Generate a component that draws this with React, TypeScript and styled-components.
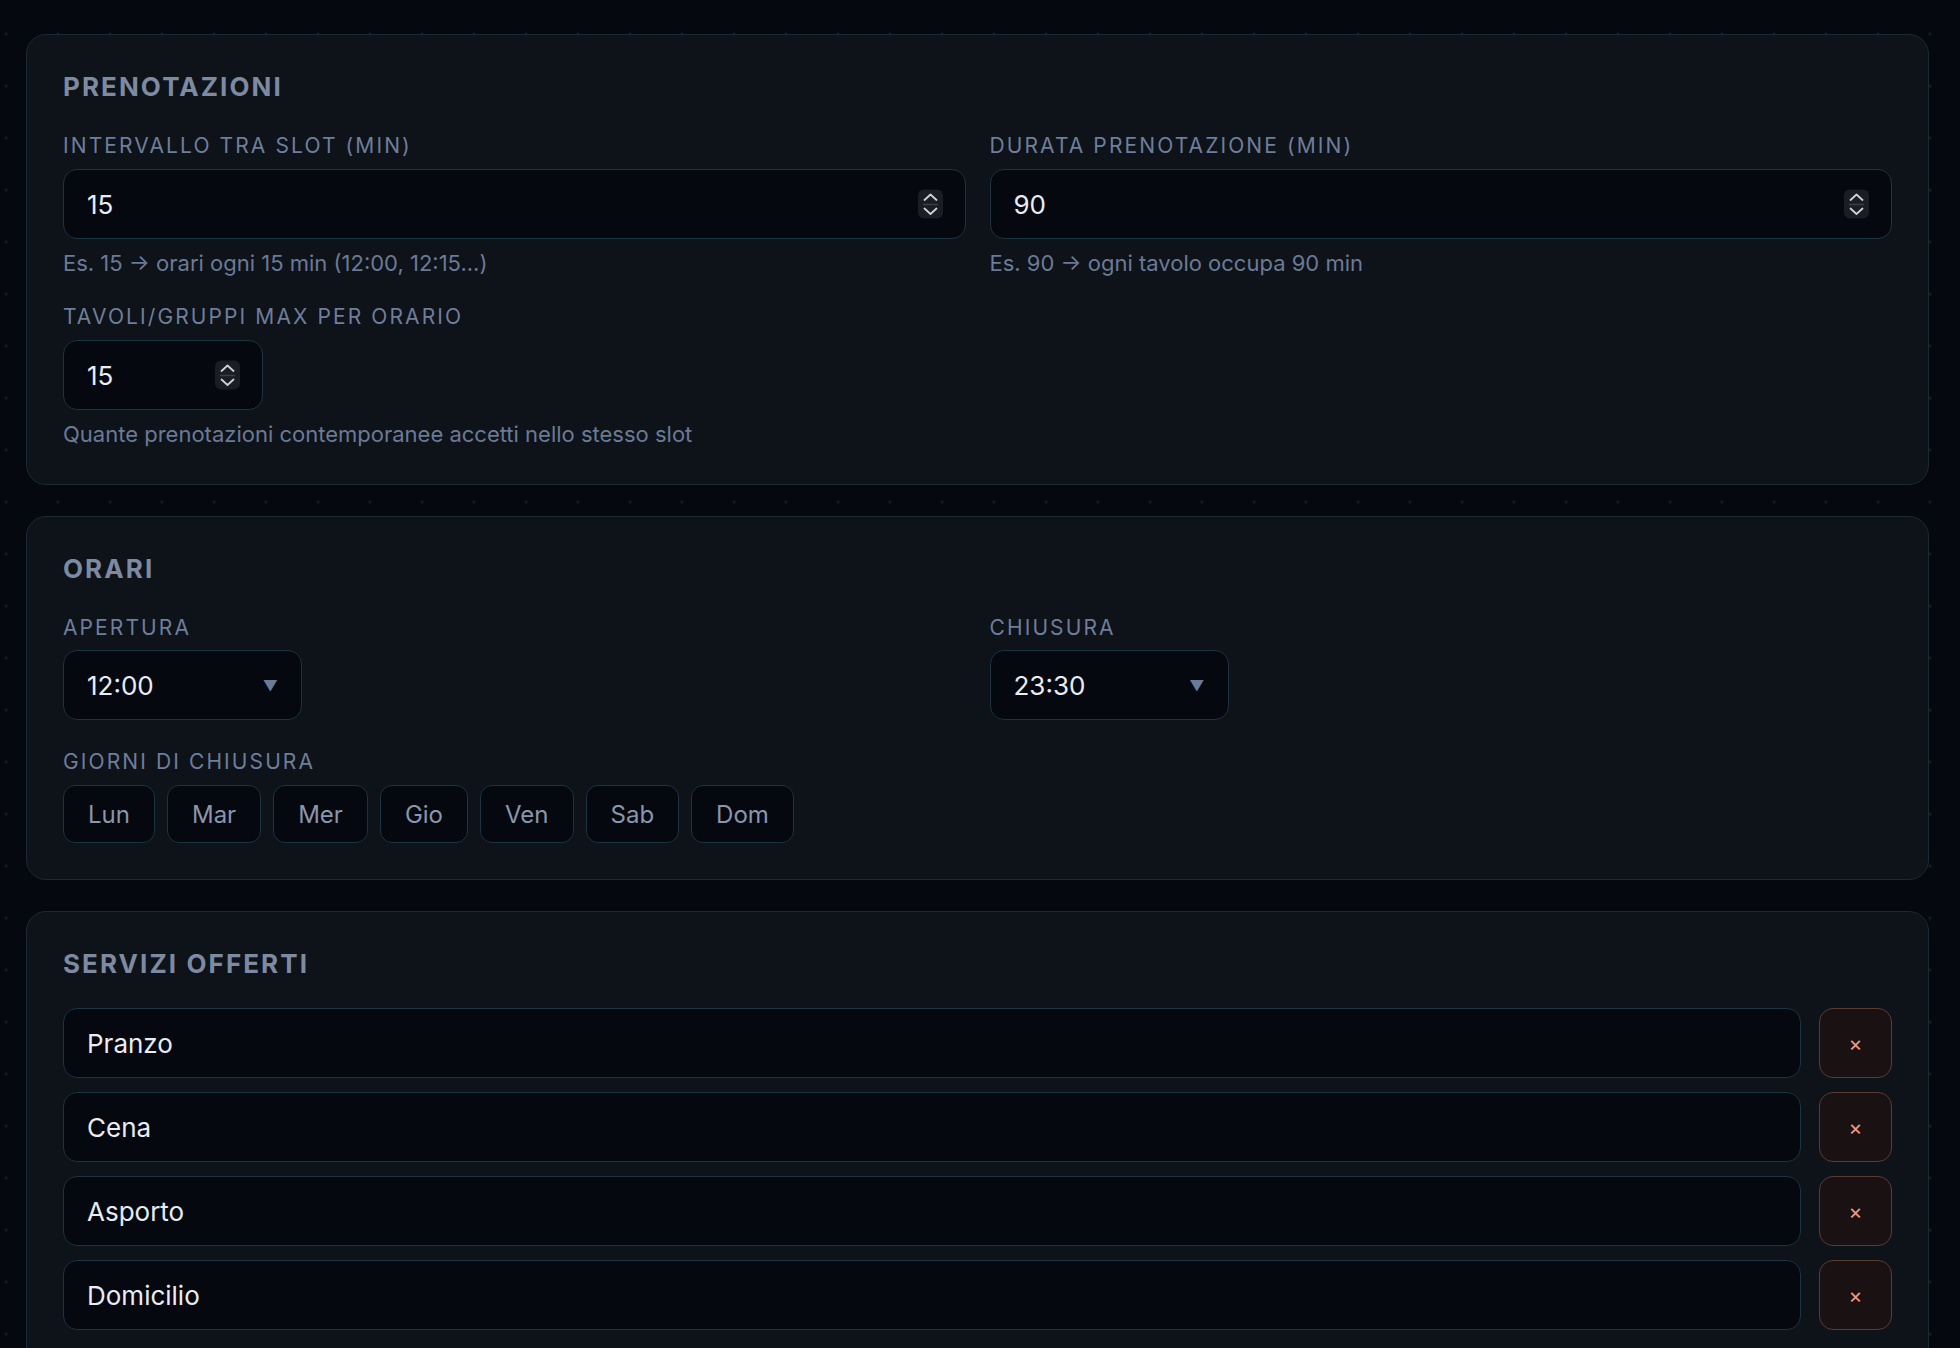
import React from "react";
import styled, { createGlobalStyle } from "styled-components";

const GlobalStyle = createGlobalStyle`
  html, body {
    margin: 0;
    background: #05080f;
  }
  body {
    font-family: Inter, "Noto Sans", sans-serif;
    color: #e6e9ef;
  }
  * {
    box-sizing: border-box;
  }
`;

const Page = styled.div`
  min-height: 100vh;
  padding: 34px 31px 40px 26px;
  display: flex;
  flex-direction: column;
  gap: 31px;
  background-color: #05080f;
  background-image: radial-gradient(circle, rgba(36, 50, 68, 0.5) 1.2px, transparent 1.8px);
  background-size: 52px 52px;
  background-position: 32px 8px;
`;

const Card = styled.section`
  background: #0e1219;
  border: 1px solid #1a2a36;
  border-radius: 20px;
  padding: 36px;
`;

const CardTitle = styled.h2`
  margin: 0 0 28px;
  font-size: 26px;
  line-height: 32px;
  font-weight: 700;
  letter-spacing: 0.08em;
  color: #7d8aa2;
  text-transform: uppercase;
`;

const Grid = styled.div<{ $rowGap: number }>`
  display: grid;
  grid-template-columns: 1fr 1fr;
  column-gap: 24px;
  row-gap: ${(p) => p.$rowGap}px;
`;

const Field = styled.div<{ $span?: boolean }>`
  display: flex;
  flex-direction: column;
  align-items: flex-start;
  grid-column: ${(p) => (p.$span ? "1 / -1" : "auto")};
`;

const Label = styled.label`
  font-size: 21px;
  line-height: 30px;
  letter-spacing: 0.1em;
  color: #6f7e9b;
  text-transform: uppercase;
  margin-bottom: 8px;
`;

const Help = styled.div`
  margin-top: 10px;
  font-size: 22px;
  line-height: 28px;
  color: #6b7a96;
`;

const baseInput = `
  height: 70px;
  background: #05080f;
  border: 1px solid #1c3342;
  border-radius: 14px;
  color: #e9ecf2;
  font-family: Inter, "Noto Sans", sans-serif;
  font-size: 26px;
  outline: none;
  color-scheme: dark;
`;

const NumberWrap = styled.div<{ $width?: number }>`
  position: relative;
  width: ${(p) => (p.$width ? `${p.$width}px` : "100%")};
`;

const NumberInput = styled.input`
  ${baseInput}
  width: 100%;
  padding: 0 60px 0 23px;
  -moz-appearance: textfield;
  &::-webkit-inner-spin-button,
  &::-webkit-outer-spin-button {
    -webkit-appearance: none;
    margin: 0;
  }
`;

const SpinBox = styled.span`
  position: absolute;
  right: 23px;
  top: 50%;
  transform: translateY(-50%);
  width: 25px;
  height: 29px;
  border-radius: 6px;
  background: #1a1d24;
  display: flex;
  pointer-events: none;
`;

const TextInput = styled.input`
  ${baseInput}
  flex: 1;
  min-width: 0;
  padding: 0 23px;
`;

const SelectWrap = styled.div`
  position: relative;
  width: 239px;
  margin-top: -1px;
`;

const Select = styled.select`
  ${baseInput}
  width: 100%;
  appearance: none;
  padding: 0 23px;
`;

const Caret = styled.span`
  position: absolute;
  right: 24px;
  top: 50%;
  transform: translateY(-50%);
  font-size: 15px;
  color: #6b7a99;
  pointer-events: none;
`;

const DayRow = styled.div`
  display: flex;
  gap: 12px;
`;

const DayButton = styled.button`
  height: 58px;
  padding: 0 24px;
  background: #05080f;
  border: 1px solid #1c3342;
  border-radius: 12px;
  color: #8a96ab;
  font-family: Inter, "Noto Sans", sans-serif;
  font-size: 24px;
  cursor: pointer;
`;

const ServiceList = styled.div`
  display: flex;
  flex-direction: column;
  gap: 14px;
`;

const ServiceRow = styled.div`
  display: flex;
  gap: 18px;
`;

const RemoveButton = styled.button`
  width: 73px;
  height: 70px;
  flex-shrink: 0;
  background: #1a1112;
  border: 1px solid #5b3b32;
  border-radius: 14px;
  color: #ec9a7e;
  font-family: Inter, "Noto Sans", sans-serif;
  font-size: 21px;
  cursor: pointer;
`;

const days = ["Lun", "Mar", "Mer", "Gio", "Ven", "Sab", "Dom"];
const services = ["Pranzo", "Cena", "Asporto", "Domicilio"];

const Spinner = () => (
  <SpinBox>
    <svg width="25" height="29" viewBox="0 0 25 29" fill="none">
      <path d="M6.5 10.5 L12.5 5 L18.5 10.5" stroke="#cdd1d8" strokeWidth="1.8" strokeLinecap="round" strokeLinejoin="round" />
      <path d="M5 15 H20" stroke="#3a3f49" strokeWidth="1.6" />
      <path d="M6.5 19 L12.5 24.5 L18.5 19" stroke="#cdd1d8" strokeWidth="1.8" strokeLinecap="round" strokeLinejoin="round" />
    </svg>
  </SpinBox>
);

const NumberField = ({ value, width }: { value: number; width?: number }) => (
  <NumberWrap $width={width}>
    <NumberInput type="number" defaultValue={value} />
    <Spinner />
  </NumberWrap>
);

export default function App() {
  return (
    <>
      <GlobalStyle />
      <Page>
        <Card>
          <CardTitle>Prenotazioni</CardTitle>
          <Grid $rowGap={25}>
            <Field>
              <Label>Intervallo tra slot (min)</Label>
              <NumberField value={15} />
              <Help>Es. 15 → orari ogni 15 min (12:00, 12:15...)</Help>
            </Field>
            <Field>
              <Label>Durata prenotazione (min)</Label>
              <NumberField value={90} />
              <Help>Es. 90 → ogni tavolo occupa 90 min</Help>
            </Field>
            <Field $span>
              <Label>Tavoli/gruppi max per orario</Label>
              <NumberField value={15} width={200} />
              <Help>Quante prenotazioni contemporanee accetti nello stesso slot</Help>
            </Field>
          </Grid>
        </Card>

        <Card>
          <CardTitle>Orari</CardTitle>
          <Grid $rowGap={27}>
            <Field>
              <Label>Apertura</Label>
              <SelectWrap>
                <Select defaultValue="12:00">
                  <option>12:00</option>
                </Select>
                <Caret>▼</Caret>
              </SelectWrap>
            </Field>
            <Field>
              <Label>Chiusura</Label>
              <SelectWrap>
                <Select defaultValue="23:30">
                  <option>23:30</option>
                </Select>
                <Caret>▼</Caret>
              </SelectWrap>
            </Field>
            <Field $span>
              <Label>Giorni di chiusura</Label>
              <DayRow>
                {days.map((d) => (
                  <DayButton key={d}>{d}</DayButton>
                ))}
              </DayRow>
            </Field>
          </Grid>
        </Card>

        <Card>
          <CardTitle>Servizi offerti</CardTitle>
          <ServiceList>
            {services.map((s) => (
              <ServiceRow key={s}>
                <TextInput defaultValue={s} />
                <RemoveButton>×</RemoveButton>
              </ServiceRow>
            ))}
          </ServiceList>
        </Card>
      </Page>
    </>
  );
}
